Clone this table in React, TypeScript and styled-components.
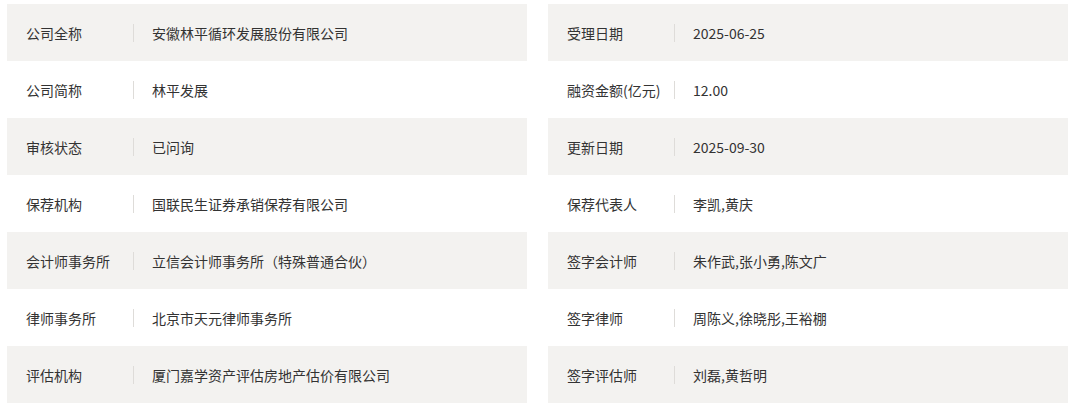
import React from "react";
import styled, { createGlobalStyle } from "styled-components";

const GlobalStyle = createGlobalStyle`
  html, body {
    margin: 0;
    padding: 0;
    background: #ffffff;
  }
  body {
    font-family: "Noto Sans CJK SC", "Noto Sans", sans-serif;
  }
`;

const Page = styled.div`
  padding: 4px 12px 0 7px;
  width: 1080px;
  box-sizing: border-box;
`;

const Grid = styled.div`
  display: grid;
  grid-template-columns: 520px 520px;
  column-gap: 21px;
`;

const Row = styled.div<{ $striped: boolean }>`
  display: flex;
  align-items: center;
  height: 57px;
  padding-top: 1px;
  box-sizing: border-box;
  background: ${(p) => (p.$striped ? "#f3f2f0" : "#ffffff")};
  font-size: 14px;
  color: #333333;
`;

const Label = styled.div`
  width: 107px;
  padding-left: 19px;
  white-space: nowrap;
`;

const Divider = styled.span`
  width: 1px;
  height: 18px;
  background: #dedcd9;
  flex-shrink: 0;
`;

const Value = styled.div`
  padding-left: 18px;
  white-space: nowrap;
`;

const rows: [string, string, string, string][] = [
  ["公司全称", "安徽林平循环发展股份有限公司", "受理日期", "2025-06-25"],
  ["公司简称", "林平发展", "融资金额(亿元)", "12.00"],
  ["审核状态", "已问询", "更新日期", "2025-09-30"],
  ["保荐机构", "国联民生证券承销保荐有限公司", "保荐代表人", "李凯,黄庆"],
  ["会计师事务所", "立信会计师事务所（特殊普通合伙）", "签字会计师", "朱作武,张小勇,陈文广"],
  ["律师事务所", "北京市天元律师事务所", "签字律师", "周陈义,徐晓彤,王裕棚"],
  ["评估机构", "厦门嘉学资产评估房地产估价有限公司", "签字评估师", "刘磊,黄哲明"],
];

export default function App() {
  return (
    <>
      <GlobalStyle />
      <Page>
        <Grid>
          {rows.map(([l1, v1, l2, v2], i) => (
            <React.Fragment key={i}>
              <Row $striped={i % 2 === 0}>
                <Label>{l1}</Label>
                <Divider />
                <Value>{v1}</Value>
              </Row>
              <Row $striped={i % 2 === 0}>
                <Label>{l2}</Label>
                <Divider />
                <Value>{v2}</Value>
              </Row>
            </React.Fragment>
          ))}
        </Grid>
      </Page>
    </>
  );
}
